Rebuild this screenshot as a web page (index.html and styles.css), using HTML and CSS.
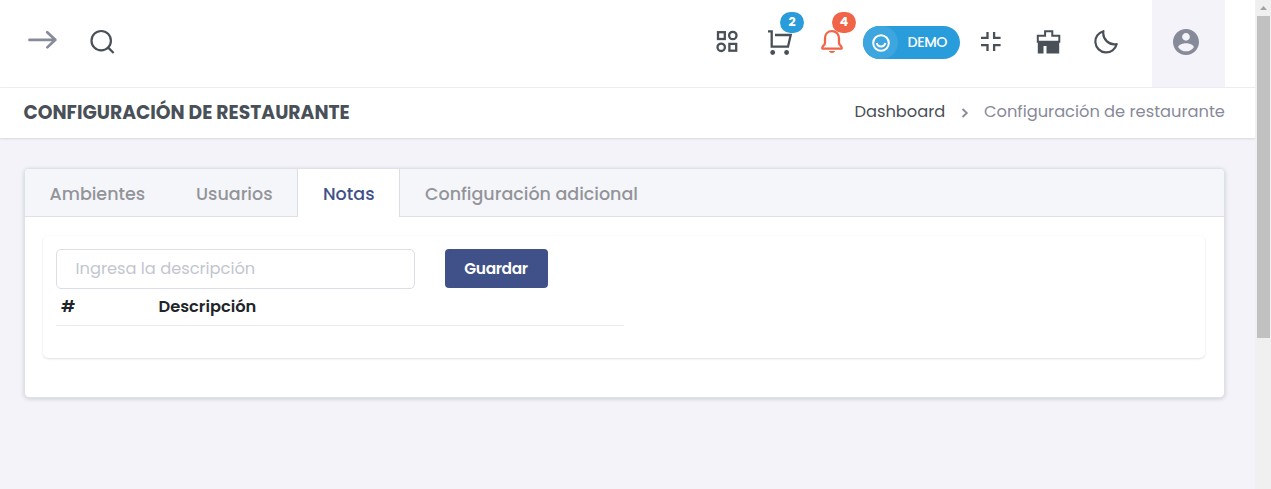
FILE: index.html
```html
<!DOCTYPE html>
<html lang="es">
<head>
<meta charset="utf-8">
<title>Configuración de restaurante</title>
<link rel="stylesheet" href="styles.css">
</head>
<body>
<div class="app">
  <div class="page">
    <header class="topbar">
      <div class="topbar-left">
        <svg class="icon muted" width="30" height="30" viewBox="0 0 30 30" fill="none" stroke="currentColor" stroke-width="2.700" stroke-linecap="round" stroke-linejoin="round"><path d="M1.500 12.900H27.300M19.200 5.200l8.100 7.500-8 7.700"/></svg>
        <svg class="icon" width="30" height="30" viewBox="0 0 30 30" fill="none" stroke="currentColor" stroke-width="2.200"><circle cx="13.200" cy="13.700" r="9.700"/><path d="M20 20.400l5.600 5.600"/></svg>
      </div>
      <div class="topbar-right">
        <svg class="icon grid-icon" width="22" height="30" viewBox="0 0 22 30" fill="none" stroke="currentColor" stroke-width="2.300"><rect x="2" y="5.200" width="6.800" height="6.800"/><circle cx="16.800" cy="8.500" r="3.700"/><circle cx="5.200" cy="20.300" r="3.700"/><rect x="13.400" y="16.900" width="6.800" height="6.800"/></svg>
        <div class="action cart">
          <svg class="icon" width="24" height="30" viewBox="0 0 24 30" fill="none" stroke="currentColor" stroke-width="2.300"><path d="M0 4.300h3.700v15.400h16.300L22.700 8H7"/><circle cx="4.700" cy="25.500" r="2.400" fill="currentColor" stroke="none"/><circle cx="18.600" cy="25.500" r="2.400" fill="currentColor" stroke="none"/></svg>
          <span class="badge badge-info">2</span>
        </div>
        <div class="action bell">
          <svg class="icon danger" width="22" height="30" viewBox="0 0 22 30" fill="none" stroke="currentColor" stroke-width="2.300" stroke-linejoin="round"><path d="M11 4.200c-4.300 0-7 3-7 7.100v4.500c0 1.700-.8 2.500-2 3.400-.8.6-.8 2.400-.5 2.400h19c.3 0 .3-1.800-.5-2.400-1.200-.9-2-1.700-2-3.400v-4.500c0-4.100-2.700-7.100-7-7.100z"/><path d="M7.800 24h6.400c-.5 1.300-1.600 2-3.200 2s-2.700-.7-3.200-2z" fill="currentColor" stroke="none"/></svg>
          <span class="badge badge-danger">4</span>
        </div>
        <div class="demo">
          <span class="demo-face"><svg width="18" height="18" viewBox="0 0 18 18" fill="none" stroke="#fff" stroke-width="2"><circle cx="9" cy="9" r="7.800"/><path d="M4.700 9a4.400 4.400 0 0 0 8.600 0"/></svg></span>
          <span class="demo-label">DEMO</span>
        </div>
        <svg class="icon shrink-icon" width="20" height="30" viewBox="0 0 20 30" fill="none" stroke="currentColor" stroke-width="2.300"><path d="M0 10.900h6.500V5M19.600 10.900h-6.500V5M0 18.100h6.500V24M19.600 18.100h-6.500V24"/></svg>
        <svg class="icon brush-icon" width="25" height="30" viewBox="0 0 25 30"><path d="M1.800 8.700h7.300V4.300h7.200v4.400h7v6.100H1.800z" fill="none" stroke="currentColor" stroke-width="2"/><path d="M1.800 14h21.400v12.600H10.500V19H7.500v7.600H1.800z" fill="currentColor"/></svg>
        <svg class="icon moon-icon" width="24" height="30" viewBox="0 0 24 30" fill="none" stroke="currentColor" stroke-width="2.200" stroke-linejoin="round"><path d="M9.400 4.200A10.800 10.800 0 1 0 22.700 17.100A11.300 11.300 0 0 1 9.400 4.200z"/></svg>
        <div class="user"><svg width="26" height="26" viewBox="2 2 20 20" fill="currentColor"><path d="M12 2C6.480 2 2 6.480 2 12s4.480 10 10 10 10-4.480 10-10S17.520 2 12 2zm0 3c1.660 0 3 1.340 3 3s-1.340 3-3 3-3-1.340-3-3 1.340-3 3-3zm0 14.200c-2.500 0-4.710-1.280-6-3.220.03-1.990 4-3.080 6-3.080 1.990 0 5.970 1.090 6 3.080-1.290 1.940-3.500 3.220-6 3.220z"/></svg></div>
      </div>
    </header>
    <div class="titlebar">
      <h1 class="title">CONFIGURACIÓN DE RESTAURANTE</h1>
      <nav class="crumbs">
        <a class="crumb-home">Dashboard</a>
        <svg class="crumb-sep" width="8" height="12" viewBox="0 0 8 12" fill="none" stroke="currentColor" stroke-width="1.800"><path d="M1.500 2l4.300 4-4.300 4"/></svg>
        <span class="crumb-current">Configuración de restaurante</span>
      </nav>
    </div>
    <main class="card">
      <div class="tabs">
        <div class="tab tab-ambientes">Ambientes</div>
        <div class="tab tab-usuarios">Usuarios</div>
        <div class="tab tab-notas active">Notas</div>
        <div class="tab tab-config">Configuración adicional</div>
      </div>
      <div class="card-body">
        <section class="panel">
          <div class="form-row">
            <input class="field" type="text" placeholder="Ingresa la descripción">
            <button class="save" type="button">Guardar</button>
          </div>
          <div class="table-head"><span class="col-num">#</span><span class="col-desc">Descripción</span></div>
        </section>
      </div>
    </main>
  </div>
  <div class="scrollbar"><div class="scroll-arrow"></div><div class="scroll-thumb"></div></div>
</div>
</body>
</html>
```
FILE: styles.css
```css
* { box-sizing: border-box; }
body { margin: 0; font-family: Poppins, Inter, "Open Sans", sans-serif; color: #495057; overflow: hidden; }
.app { display: flex; height: 489px; background: #f3f3f9; }
.page { width: 1255px; }
.topbar { display: flex; justify-content: space-between; height: 88px; padding-right: 30px; background: #fff; border-bottom: 1px solid #efeff3; }
.topbar-left { display: flex; gap: 30px; padding: 27px 0 0 28px; }
.topbar-right { display: flex; align-items: flex-start; }
.icon { display: block; flex: none; color: #495057; }
.topbar-right .icon { margin-top: 27px; }
.icon.muted { color: #878a99; }
.topbar-right .icon.danger { color: #f06548; }
.action { position: relative; }
.cart { margin-left: 30px; }
.bell { margin-left: 29px; }
.badge { position: absolute; top: 12px; left: 12px; width: 24px; height: 21px; border-radius: 11px; color: #fff; font-size: 12.500px; font-weight: 700; line-height: 20px; text-align: center; }
.bell .badge { left: 11px; }
.badge-info { background: #299cdb; }
.badge-danger { background: #f06548; }
.demo { display: flex; align-items: center; width: 97px; height: 33px; margin: 26px 0 0 20px; border-radius: 17px; background: #299cdb; color: #fff; }
.demo-face { display: flex; align-items: center; justify-content: center; width: 35px; height: 33px; border-radius: 17px; background: #3ea6df; }
.demo-label { margin-left: 9.500px; font-size: 14.220px; font-weight: 500; letter-spacing: -0.400px; }
.shrink-icon { margin-left: 21px; }
.brush-icon { margin-left: 35px; }
.moon-icon { margin-left: 33px; }
.user { display: flex; align-items: center; width: 73px; height: 87px; margin-left: 34px; padding: 0 0 4px 21px; background: #f3f3f9; color: #878a99; }
.titlebar { display: flex; justify-content: space-between; align-items: center; height: 50px; padding: 0 30px 0 23.500px; background: #fff; box-shadow: 0 1px 2px rgba(56, 65, 74, .15); }
.title { margin: 0; padding-bottom: 2px; font-size: 18.750px; font-weight: 700; white-space: nowrap; }
.crumbs { display: flex; align-items: center; padding-bottom: 3px; font-size: 16.250px; white-space: nowrap; }
.crumb-home { width: 90.500px; }
.crumb-sep { margin: 3px 15px 0 16px; color: #878a99; }
.crumb-current { width: 241px; color: #878a99; }
.card { width: 1201px; height: 230px; margin: 30px 0 0 24px; background: #fff; border: 1px solid #dfe1e9; border-radius: 5px; box-shadow: 0 1px 4px rgba(56, 65, 74, .2); }
.tabs { display: flex; height: 48px; background: #f5f6fa; border-bottom: 1px solid #e0e1e8; border-radius: 4px 4px 0 0; }
.tab { height: 48px; padding-left: 25px; font-size: 17.500px; font-weight: 500; line-height: 50px; color: #939499; white-space: nowrap; }
.tab-ambientes { width: 146px; padding-left: 24.500px; }
.tab-usuarios { width: 126px; }
.tab-notas { width: 103px; }
.tab.active { background: #fff; border: 1px solid #dcdee6; border-width: 0 1px; color: #405189; }
.card-body { padding: 19px 19px 0 18px; }
.panel { height: 122px; padding: 13px; border-radius: 5px; background: #fff; box-shadow: 0 1px 2px rgba(56, 65, 74, .15), 0 0 1px rgba(56, 65, 74, .08); }
.form-row { display: flex; gap: 30px; }
.field { width: 359px; height: 40px; padding: 0 18px 2px 18.500px; border: 1px solid #dcdde7; border-radius: 5px; background: #fff; font: 16.250px Poppins, Inter, sans-serif; }
.field::placeholder { color: #c3c6cf; opacity: 1; }
.save { width: 103px; height: 39px; padding: 0 1px 0 0; border: 0; border-radius: 4px; background: #405189; color: #fff; font: 600 15.400px Poppins, Inter, sans-serif; letter-spacing: -0.350px; }
.table-head { display: flex; width: 568px; height: 37px; padding-left: 5px; border-bottom: 1px solid #e9ebec; color: #212529; font-size: 16.250px; font-weight: 600; line-height: 35px; }
.col-num { width: 97.500px; }
.scrollbar { width: 16px; padding: 0 1px 0 2px; background: #f0f0f0; }
.scroll-arrow { width: 7px; height: 4px; margin: 6px 0 6px 3px; background: #a3a3a3; clip-path: polygon(50% 0, 100% 100%, 0 100%); }
.scroll-thumb { height: 322px; background: #c1c1c1; }
```
